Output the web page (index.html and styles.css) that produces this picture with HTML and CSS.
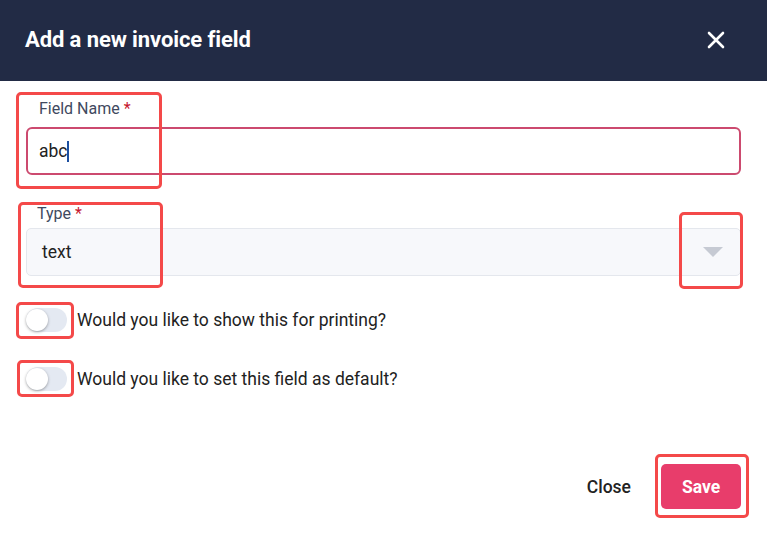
FILE: index.html
```html
<!DOCTYPE html>
<html>
<head>
<meta charset="utf-8">
<link rel="stylesheet" href="styles.css">
</head>
<body>
<div class="dialog">
  <header class="head">
    <h1 class="title">Add a new invoice field</h1>
    <button class="x-btn" aria-label="Close">
      <svg width="18" height="18" viewBox="0 0 18 18"><path d="M2 2L16 16M16 2L2 16" stroke="#fff" stroke-width="2.6" stroke-linecap="round"/></svg>
    </button>
  </header>
  <main class="body">
    <div class="field">
      <label class="label">Field Name <span class="req">*</span></label>
      <div class="input"><span>abc</span><span class="caret"></span></div>
    </div>
    <div class="field type">
      <label class="label label-type">Type <span class="req">*</span></label>
      <div class="select"><span>text</span><span class="arrow"></span></div>
    </div>
    <div class="toggle-row first">
      <span class="toggle"><span class="knob"></span></span>
      <span class="toggle-text">Would you like to show this for printing?</span>
    </div>
    <div class="toggle-row second">
      <span class="toggle"><span class="knob"></span></span>
      <span class="toggle-text">Would you like to set this field as default?</span>
    </div>
    <div class="footer">
      <button class="btn-close">Close</button>
      <button class="btn-save">Save</button>
    </div>
  </main>
  <div class="mark m1"></div>
  <div class="mark m2"></div>
  <div class="mark m3"></div>
  <div class="mark m4"></div>
  <div class="mark m5"></div>
  <div class="mark m6"></div>
</div>
</body>
</html>
```
FILE: styles.css
```css
* { box-sizing: border-box; }
html, body { margin: 0; padding: 0; background: #fff; }
body { font-family: Roboto, "Liberation Sans", sans-serif; }
.dialog { position: relative; width: 767px; height: 533px; background: #fff; }
.head {
  height: 81px; background: #222b45;
  display: flex; align-items: center; justify-content: space-between;
  padding: 0 42px 2px 25px;
}
.title { margin: 0; color: #fff; font-size: 22px; font-weight: 700; letter-spacing: -0.1px; }
.x-btn { background: none; border: 0; padding: 0; display: flex; }
.body { padding: 18px 26px 0 26px; }
.label {
  display: block; font-size: 16px; line-height: 20px; color: #3f4960;
  padding-left: 13px; margin-bottom: 8px;
}
.req { color: #c6182e; }
.input {
  height: 48px; border: 2px solid #cc4a6f; border-radius: 6px;
  display: flex; align-items: center; padding-left: 11px;
  font-size: 17.5px; color: #222;
}
.caret { width: 2px; height: 21px; background: #1c4fa0; margin-left: -1px; }
.type { margin-top: 29px; }
.label-type { padding-left: 11px; margin-bottom: 4px; }
.select {
  height: 48px; background: #f7f8fb; border: 1px solid #e4e7ed; border-radius: 5px;
  display: flex; align-items: center; justify-content: space-between;
  padding: 0 17px 0 15px; font-size: 17.5px; color: #222;
}
.arrow {
  width: 0; height: 0;
  border-left: 10px solid transparent; border-right: 10px solid transparent;
  border-top: 10px solid #c6cad3;
}
.toggle-row { display: flex; align-items: center; height: 26px; }
.first { margin-top: 31px; }
.second { margin-top: 33px; }
.toggle {
  width: 41px; height: 24px; border-radius: 12px; background: #e4e9f2;
  display: flex; align-items: center; padding-left: 0;
}
.knob {
  width: 22px; height: 22px; border-radius: 50%; background: #fff;
  box-shadow: 0 1px 3px rgba(0,0,0,0.35);
}
.toggle-text { margin-left: 10px; font-size: 17.5px; color: #222; }
.footer { display: flex; justify-content: flex-end; align-items: center; margin-top: 72px; }
.btn-close {
  background: none; border: 0; font-family: inherit; font-size: 17.5px; font-weight: 500;
  color: #222; padding: 0; margin-right: 30px;
}
.btn-save {
  width: 80px; height: 45px; border: 0; border-radius: 5px; background: #e83d6b;
  color: #fff; font-family: inherit; font-size: 17.5px; font-weight: 700;
}
.mark { position: absolute; border: 3px solid #f44949; border-radius: 5px; }
.m1 { left: 16px; top: 92px; width: 146px; height: 97px; }
.m2 { left: 18px; top: 202px; width: 145px; height: 86px; }
.m3 { left: 679px; top: 212px; width: 64px; height: 77px; }
.m4 { left: 16px; top: 302px; width: 58px; height: 37px; }
.m5 { left: 17px; top: 360px; width: 57px; height: 37px; }
.m6 { left: 655px; top: 454px; width: 94px; height: 64px; }
```
